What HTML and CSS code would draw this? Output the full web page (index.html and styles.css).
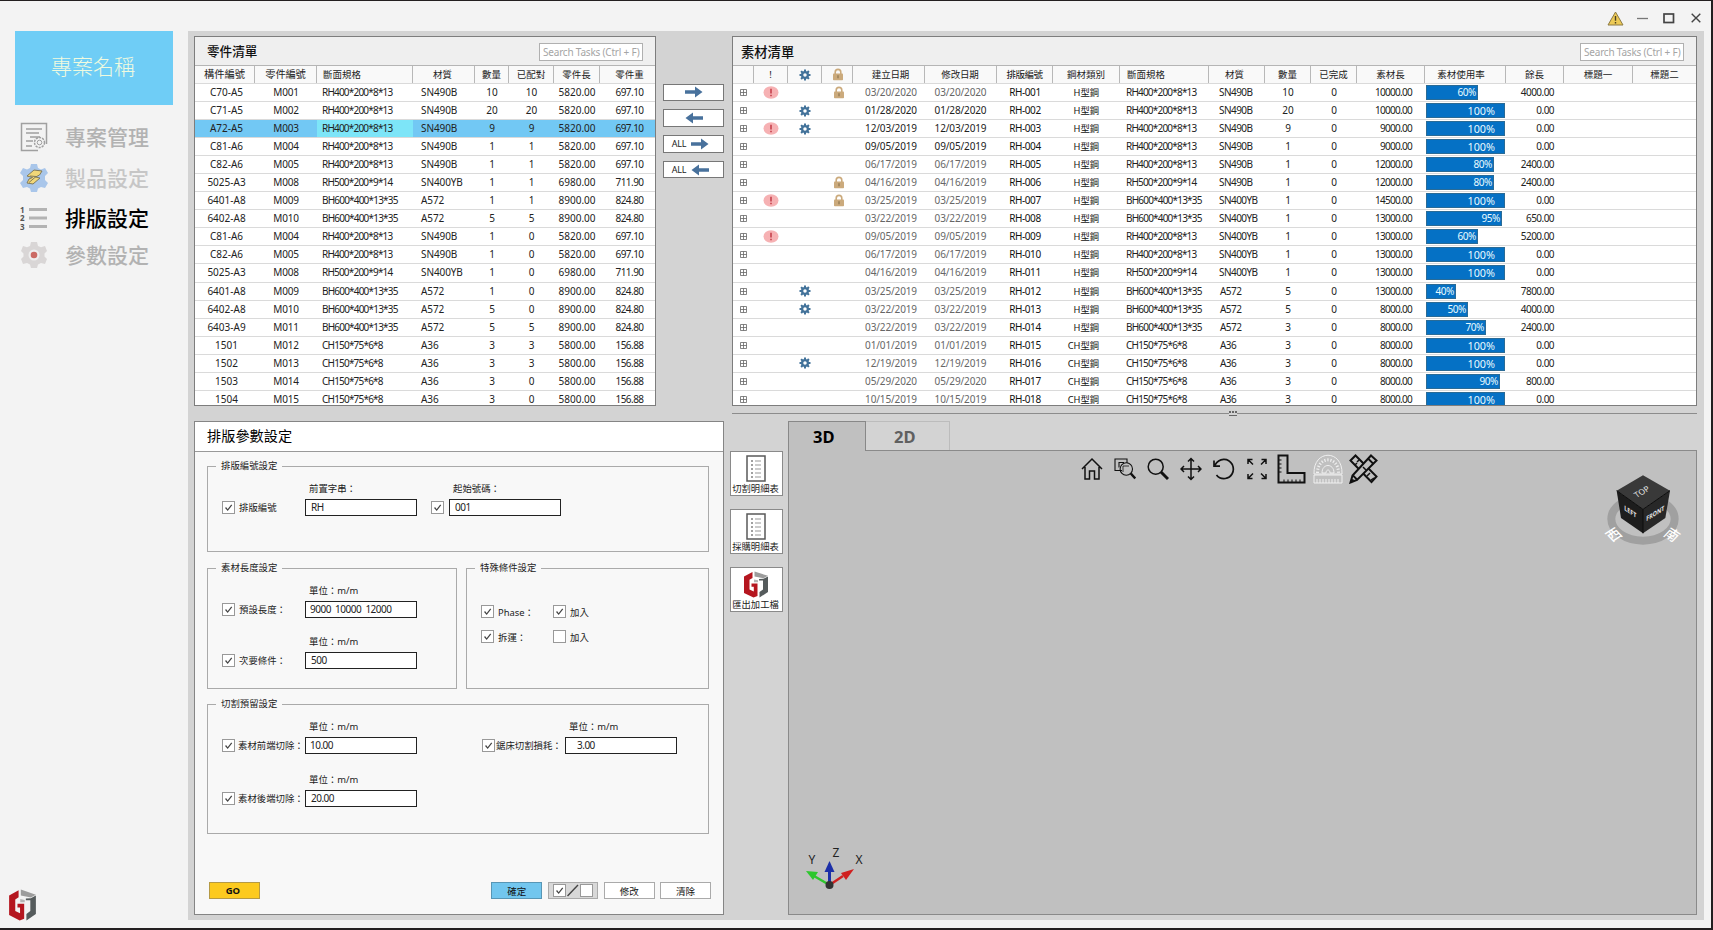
FILE: index.html
```html
<!DOCTYPE html>
<html lang="zh-Hant">
<head>
<meta charset="utf-8">
<title>排版設定</title>
<link rel="stylesheet" href="styles.css">
</head>
<body>
<svg class="defs" width="0" height="0">
  <defs>
    <symbol id="gear" viewBox="0 0 24 24"><path fill="#42729a" fill-rule="evenodd" d="M10 1h4v3l2 .8 2.300-2.100 2.900 2.900L19.200 8l.8 2h3v4h-3l-.8 2 2.100 2.300-2.900 2.900L16 19.200l-2 .8v3h-4v-3l-2-.8-2.300 2.100-2.900-2.900L4.800 16 4 14H1v-4h3l.8-2-2.100-2.300 2.900-2.900L8 4.800l2-.8zM12 8.500a3.500 3.500 0 1 0 0 7a3.500 3.500 0 0 0 0-7z"/></symbol>
    <symbol id="lock" viewBox="0 0 12 13"><path d="M3.200 6V4.200a2.800 2.800 0 0 1 5.600 0V6" fill="none" stroke="#cbaa7c" stroke-width="1.600"/><rect x="1" y="5.500" width="10" height="6.700" rx=".8" fill="#cbaa7c"/><path d="M6 7.300v3" stroke="#8d7550" stroke-width="1.200"/></symbol>
    <symbol id="alert" viewBox="0 0 16 13"><ellipse cx="8" cy="6.500" rx="7.500" ry="6.200" fill="#f6b1b3"/><path d="M8 2.700v4.800M8 8.800v1.500" stroke="#c23a45" stroke-width="1.500"/></symbol>
    <symbol id="plus" viewBox="0 0 7 7"><path d="M.5.5h6v6h-6zM.5 3.500h6M3.500.5v6" fill="none" stroke="#666" stroke-width=".8"/></symbol>
    <symbol id="arrow" viewBox="0 0 18 12"><path d="M0 4.200h10V.5L17.500 6 10 11.500V7.800H0z" fill="#48719c"/></symbol>
    <symbol id="logo" viewBox="0 0 26 27"><path fill="#b5161f" d="M9.500 1L1 5.500v16.500l9.500 4.500 4-1.500V12.500H8.500v3.200h2.300v4.800L6.500 18.500V8.800l3-1.800z"/><path fill="#9c9c9c" d="M11.500.5L25 4.800l-4.500 2.400-9-1.700z"/><path fill="#555b5c" d="M25 5.500V21l-8.500 5.500v-5.500l3.500-2.500V9.500h-4V8l4.500-.2z"/><path fill="#b5b5b5" d="M11 8.500l4 .7v2h-4z"/></symbol>
    <symbol id="sheet" viewBox="0 0 20 27"><path d="M1 1h18v25H1z" fill="#fff" stroke="#5a5a5a" stroke-width="1.500"/><path d="M5 6h2M5 10h2M5 14h2M5 18h2M5 22h2" stroke="#444" stroke-width="1.200"/><path d="M9 6h6M9 10h6M9 14h6M9 18h6M9 22h6" stroke="#999"/></symbol>
    <symbol id="check" viewBox="0 0 13 13"><path d="M3 6.500l2.500 3L10.300 3.500" fill="none" stroke="#444" stroke-width="1.500"/></symbol>
  </defs>
</svg>
<div class="window">
  <aside class="sidebar">
    <div class="project">專案名稱</div>
    <nav class="menu">
      <a class="item">
        <svg width="28" height="30" viewBox="0 0 28 30" fill="none" stroke="#a0a0a0"><path d="M18 28.500H1.500v-27h25V22" stroke-width="1.500"/><path d="M6 7h16M6 11h13M10 15h10M6 19h7M6 24h6" stroke-width="1.300"/><circle cx="19.500" cy="20.500" r="5" stroke-dasharray="2.200 1" stroke-width="1.500"/><circle cx="19.500" cy="20.500" r="2.300"/></svg>
        <span>專案管理</span></a>
      <a class="item pale">
        <svg width="28" height="30" viewBox="0 0 28 30"><path d="M11 1h6l1 4 3 1.500 4-1.500 3 5-3 3v4l3 3-3 5-4-1-3 1.500-1 3.500h-6l-1-3.500L7 24l-4 1-3-5 3-3v-4l-3-3 3-5 4 1.500L10 5z" fill="#a9c6ea"/><path d="M7 13l7-6 8 1-2.500 4-4 2 4.500 1-7 6-6-1 2-4 3.500-1.500z" fill="#f1d778" stroke="#807a5c"/><path d="M10 13l6 .5-7 6" fill="none" stroke="#807a5c"/></svg>
        <span>製品設定</span></a>
      <a class="item active">
        <svg width="28" height="26" viewBox="0 0 28 26"><path d="M9 4.500h18M9 13h18M9 21.500h18" stroke="#b3b3b3" stroke-width="3"/><g class="nums"><text x="0" y="7.500">1</text><text x="0" y="16">2</text><text x="0" y="24.500">3</text></g></svg>
        <span>排版設定</span></a>
      <a class="item">
        <svg width="28" height="28" viewBox="0 0 28 28"><path d="M11 1h6l1 4 3 1.300 4-1.300 2 5-2.500 2.500v3L27 18l-2 5-4-1-3 1.500-1 3.500h-6l-1-3.500L7 22l-4 1-2-5 2.500-2.500v-3L1 10l2-5 4 1.300L10 5z" fill="#d9d6d6"/><circle cx="14" cy="14" r="5.500" fill="#eee"/><circle cx="14" cy="14" r="3.300" fill="#cb6a64"/></svg>
        <span>參數設定</span></a>
    </nav>
    <svg class="brand" width="29" height="32" viewBox="0 0 26 27" preserveAspectRatio="none"><use href="#logo"/></svg>
  </aside>

  <div class="body">
    <header class="titlebar">
      <svg width="17" height="15" viewBox="0 0 17 15"><path d="M8.500 1L16 14H1z" fill="#edca56" stroke="#8c7a45"/><path d="M8.500 5v4.800M8.500 11v1.500" stroke="#4c4020" stroke-width="1.400"/></svg>
      <svg width="11" height="11" viewBox="0 0 11 11"><path d="M0 5.500h11" stroke="#777" stroke-width="1.300"/></svg>
      <svg width="12" height="11" viewBox="0 0 12 11"><rect x="1" y="1" width="9.500" height="8.500" fill="none" stroke="#444" stroke-width="1.700"/></svg>
      <svg width="10" height="10" viewBox="0 0 10 10"><path d="M.7.7l8.600 8.600M9.300.7L.7 9.300" stroke="#444" stroke-width="1.400"/></svg>
    </header>

    <main class="main">
      <section class="top">
        <div class="panel parts">
          <div class="bar"><h2>零件清單</h2><div class="search">Search Tasks (Ctrl + F)</div></div>
          <div class="rows" id="parts"></div>
        </div>
        <div class="moves">
          <button><svg width="18" height="12"><use href="#arrow"/></svg></button>
          <button><svg class="flip" width="18" height="12"><use href="#arrow"/></svg></button>
          <button>ALL<svg width="18" height="12"><use href="#arrow"/></svg></button>
          <button>ALL<svg class="flip" width="18" height="12"><use href="#arrow"/></svg></button>
        </div>
        <div class="panel stock">
          <div class="bar"><h2>素材清單</h2><div class="search">Search Tasks (Ctrl + F)</div></div>
          <div class="rows" id="stock"></div>
        </div>
      </section>

      <section class="bottom">
        <div class="panel params">
          <h3>排版參數設定</h3>
          <form class="form">
            <fieldset class="numbering">
              <legend>排版編號設定</legend>
              <div class="line">
                <div class="field"><i class="cb on"></i><span class="name">排版編號</span><label>前置字串：<b class="in">RH</b></label></div>
                <div class="field second"><i class="cb on"></i><label>起始號碼：<b class="in">001</b></label></div>
              </div>
            </fieldset>
            <div class="pair">
              <fieldset class="length">
                <legend>素材長度設定</legend>
                <div class="field"><i class="cb on"></i><span class="name">預設長度：</span><label>單位：m/m<b class="in tight">9000&nbsp; 10000&nbsp; 12000</b></label></div>
                <div class="field"><i class="cb on"></i><span class="name">次要條件：</span><label>單位：m/m<b class="in">500</b></label></div>
              </fieldset>
              <fieldset class="special">
                <legend>特殊條件設定</legend>
                <div class="opt"><i class="cb on"></i><span>Phase：</span><i class="cb on"></i><span>加入</span></div>
                <div class="opt"><i class="cb on"></i><span>拆運：</span><i class="cb"></i><span>加入</span></div>
              </fieldset>
            </div>
            <fieldset class="cut">
              <legend>切割預留設定</legend>
              <div class="line">
                <div class="field"><i class="cb on"></i><span class="name">素材前端切除：</span><label>單位：m/m<b class="in tight">10.00</b></label></div>
                <div class="field saw"><i class="cb on"></i><span class="name">鋸床切割損耗：</span><label>單位：m/m<b class="in wide">3.00</b></label></div>
              </div>
              <div class="field"><i class="cb on"></i><span class="name">素材後端切除：</span><label>單位：m/m<b class="in">20.00</b></label></div>
            </fieldset>
            <div class="actions">
              <span class="btn go">GO</span>
              <span class="btn ok">確定</span>
              <span class="btn toggle"><i class="cb on"></i><svg width="14" height="13" viewBox="0 0 14 13"><path d="M1.500 12L12 1" stroke="#444" stroke-width="1.400"/></svg><i class="cb"></i></span>
              <span class="btn">修改</span>
              <span class="btn">清除</span>
            </div>
          </form>
        </div>

        <div class="right">
          <div class="splitter"><span class="grip"></span></div>
          <div class="work">
            <div class="exports">
              <div class="ex"><svg width="20" height="27"><use href="#sheet"/></svg>切割明細表</div>
              <div class="ex"><svg width="20" height="27"><use href="#sheet"/></svg>採購明細表</div>
              <div class="ex"><svg width="26" height="27"><use href="#logo"/></svg>匯出加工檔</div>
            </div>
            <div class="viewer">
              <div class="tabs"><span class="tab on">3D</span><span class="tab">2D</span></div>
              <div class="canvas">
                <div class="tools">
                  <svg width="22" height="24" viewBox="0 0 22 24" class="ic"><path d="M1 12L11 2l10 10M4 10v12h4.500v-8h5v8H18V10"/></svg>
                  <svg width="22" height="24" viewBox="0 0 22 24" class="ic thin"><path d="M8 13.500H1V2h12v4M5 10.500V5.500h5"/><circle cx="12.300" cy="12" r="6.200"/><path d="M9 15V9h6" stroke-width=".8"/><path d="M16.800 16.500l4.500 5" stroke-width="2.500"/></svg>
                  <svg width="22" height="24" viewBox="0 0 22 24" class="ic"><circle cx="8.700" cy="9.700" r="7.500"/><path d="M14 15l7 7" stroke-width="3"/></svg>
                  <svg width="22" height="24" viewBox="0 0 22 24" class="ic"><path d="M11 1.500v21M.8 12h20.500M8 4.500l3-3 3 3M8 19.500l3 3 3-3M4 9l-3 3 3 3M18 9l3 3-3 3"/></svg>
                  <svg width="22" height="24" viewBox="0 0 22 24" class="ic"><path d="M2 8C6 1 15 0 19.300 7.500c3 7-1 13-7 14C8 22 5 20 3.500 18M1 3.500V9.200h6" stroke-width="1.700"/></svg>
                  <svg width="22" height="24" viewBox="0 0 22 24" class="ic"><path d="M2 7V2.500h4.500M2.500 3L7 7.500M15.500 2.500H20V7M19.500 3L15 7.500M2 17v4.500h4.500M2.500 21L7 16.500M15.500 21.500H20V17M19.500 21L15 16.500"/></svg>
                  <svg width="29" height="30" viewBox="0 0 29 30" class="ic"><path d="M1.500 1.500h9V19h17v9.500h-26z" stroke-width="2"/><path d="M2 6h2.500M2 10h2.500M2 14h2.500M2 18h2.500M7 28v-2.500M11 28v-2.500M15 28v-2.500M19 28v-2.500M23 28v-2.500" stroke-width="1"/></svg>
                  <svg width="30" height="30" viewBox="0 0 30 30" class="ic white"><path d="M1 20C0-5 30-5 29 20z"/><path d="M4.500 19C4.500 1.500 25.500 1.500 25.500 19" stroke-dasharray="1.200 1.800" stroke-width="3"/><path d="M9 19c0-10 12-10 12 0h-4c0-4-4-4-4 0zM1 21h28v8H1zM4 29v-4M7 29v-4M10 29v-4M13 29v-4M16 29v-4M19 29v-4M22 29v-4M25 29v-4"/></svg>
                  <svg width="29" height="30" viewBox="0 0 29 30" class="ic"><path d="M1.500 6.500l5-5L27.500 22.500l-5 5.500z" stroke-width="2"/><path d="M6 11l2-2M10 6l-2 2M18 22l3-3M22 26l3-2" stroke-width="1.500"/><path d="M22 1.500l5.500 5L8 26l-6.500 2.500L3.500 21.500z" fill="#c0c0c0" stroke-width="2"/><path d="M19 4.500l5.500 5.500M4 21.500l4.500 4.500M1.500 28.500l3-3" stroke-width="1.800"/><path d="M14 13l3 3" /></svg>
                </div>
                <svg class="cube" width="80" height="76" viewBox="0 0 240 228">
                  <ellipse cx="120" cy="147" rx="95" ry="65" fill="none" stroke="#a0a0a0" stroke-width="24"/>
                  <path d="M120 16l81 46-81 56-79-56z" fill="#393939"/><path d="M41 62l79 56v72l-66-46z" fill="#1d1d1d"/><path d="M201 62l-81 56v72l67-46z" fill="#282828"/><path d="M41 62l79 56 81-56M120 118v72" fill="none" stroke="#0c0c0c" stroke-width="3"/>
                  <g fill="#e5e5e5" text-anchor="middle" font-size="25"><text transform="matrix(.85 -.5 .6 .75 122 72)">TOP</text><text font-size="20" font-weight="bold" transform="matrix(.8 .55 0 1 82 132)">LEFT</text><text font-size="20" font-weight="bold" transform="matrix(.8 -.5 0 1 157 137)">FRONT</text></g>
                  <g class="dir" text-anchor="middle"><text transform="matrix(.85 -.55 .75 .8 43 206)">西</text><text transform="matrix(.85 .55 -.75 .8 196 206)">南</text></g>
                </svg>
                <svg class="axes" width="66" height="54" viewBox="0 -4 66 54">
                  <path d="M29.500 36L14 27" stroke="#2ec72e" stroke-width="2.500"/><path d="M6 22l12 1-5 8z" fill="#2ec72e"/>
                  <path d="M29.500 36L43 27" stroke="#d02020" stroke-width="2.500"/><path d="M54 20l-8 11-5-7z" fill="#d02020"/>
                  <path d="M29.500 36V22" stroke="#1c2fa8" stroke-width="3"/><path d="M29.500 12l5 11h-10z" fill="#1c2fa8"/><circle cx="29.500" cy="36" r="4" fill="#333"/>
                  <g font-size="12" fill="#222" text-anchor="middle"><text x="12" y="15">Y</text><text x="36" y="8">Z</text><text x="59" y="15">X</text></g>
                </svg>
              </div>
            </div>
          </div>
        </div>
      </section>
    </main>
  </div>
</div>
<script src="app.js"></script>
</body>
</html>
```
FILE: styles.css
```css
* { box-sizing: border-box; }
body { margin: 0; font-family: "Noto Sans", "Noto Sans CJK TC", sans-serif; color: #222; }
.defs { position: absolute; }
svg { display: block; flex: none; }
h2, h3 { margin: 0; }

.window { display: flex; width: 1713px; height: 930px; background: #f3f3f3; border: solid #231f20; border-width: 1px 2px 2px 0; overflow: hidden; }
.sidebar { width: 188px; display: flex; flex-direction: column; padding: 30px 0 7px 15px; }
.project { width: 158px; height: 74px; background: #6fcdf6; color: #effadf; font-size: 21px; font-weight: 300; display: flex; align-items: center; justify-content: center; padding: 0 2px 7px 0; }
.menu { display: flex; flex-direction: column; margin-top: 12px; padding-left: 5px; }
.item { display: flex; align-items: center; gap: 17px; height: 39.500px; font-size: 21px; color: #b2b2b2; font-weight: 500; }
.item span { padding-bottom: 2px; }
.item.pale { color: #c6c6c6; height: 43px; }
.item.active { color: #000; height: 36px; }
.nums { font: bold 8px "Noto Sans", sans-serif; fill: #555; }
.brand { margin-top: auto; margin-left: -7px; }

.body { width: 1516px; display: flex; flex-direction: column; }
.titlebar { height: 30px; display: flex; align-items: center; padding: 4px 4px 0 1419px; }
.titlebar svg + svg { margin-left: 13px; }
.titlebar svg:nth-child(3) { margin-left: 15px; }
.titlebar svg:nth-child(4) { margin-left: 16px; }
.main { height: 889px; background: #d3d3d3; padding: 5px 7px 5px 6px; display: flex; flex-direction: column; }
.top { display: flex; height: 370px; }
.panel { border: 1px solid #7d7d7d; background: #fff; overflow: hidden; }
.parts { width: 462px; }
.stock { width: 965px; }
.bar { height: 29px; background: #efefef; border-bottom: 1px solid #b5b5b5; display: flex; align-items: center; justify-content: space-between; padding: 2px 12px 0; }
.stock .bar { padding-left: 8px; }
.bar h2 { font-size: 12.600px; font-weight: 500; line-height: 18px; color: #111; }
.stock h2 { font-size: 13.300px; }
.search { width: 104px; height: 18px; border: 1px solid #b0b0b0; background: #fff; color: #a5a5a5; font-size: 10px; letter-spacing: -.2px; line-height: 16px; padding-left: 3px; white-space: nowrap; }

.row { display: grid; height: 18.060px; border-bottom: 1px solid #dadada; font-size: 10px; line-height: 17px; white-space: nowrap; }
.parts .row { grid-template-columns: 60px 62px 96px 62px 34px 45px 46px 55px; }
.stock .row { grid-template-columns: 21px 34px 34px 31px 72px 72px 56px 67px 89px 56px 46px 46px 68px 81px 58px 69px 63px; }
.row > span { display: flex; justify-content: center; align-items: center; }
.row.head { height: 18px; background: #f9f9f9; font-size: 9.500px; }
.row.head > span { border-right: 1px solid #b8b8b8; }
.row.head > span:last-child { border-right: 0; }
.parts .head > span:nth-child(-n+2) { font-size: 10.300px; }
.parts .row:not(.head) .p0 { padding-left: 3px; }
.row.sel { background: #72c8f4; }
.row.sel .p2 { background: #7de5f8; }
.row .p2, .row .s8 { justify-content: flex-start; padding-left: 5px; letter-spacing: -.8px; }
.row .s8 { padding-left: 6px; }
.row.head .p2, .row.head .s8 { letter-spacing: 0; padding-left: 6px; }
.row.head .s8 { padding-left: 7px; }
.row .p3 { justify-content: flex-start; padding-left: 8px; letter-spacing: -.1px; }
.head .p3 { padding-left: 20px; }
.parts .p1 { letter-spacing: -.2px; }
.parts .p7 { letter-spacing: -.55px; padding-left: 4px; }
.head .p7 { letter-spacing: 0; }
.stock .s3 { padding-left: 2px; }
.stock .s4, .stock .s5 { color: #666; letter-spacing: -.14px; }
.stock .s4 { padding-left: 4px; }
.stock .s5 { padding-right: 1px; }
.stock .dark .s4, .stock .dark .s5, .head .s4, .head .s5 { color: #222; }
.stock .s6 { letter-spacing: -.45px; color: #111; }
.stock .row:not(.head) .s7 { justify-content: flex-end; padding-right: 21px; font-size: 9.300px; color: #111; }
.stock .s9 { justify-content: flex-start; padding-left: 10px; letter-spacing: -.55px; }
.stock .a .s9 { padding-left: 11px; }
.stock .head .s9 { padding-left: 16px; letter-spacing: 0; }
.stock .row:not(.head) .s12 { justify-content: flex-end; padding-right: 13px; letter-spacing: -.7px; }
.stock .row:not(.head) .s13 { justify-content: flex-start; padding-left: 1px; }
.stock .head .s13 { padding-right: 8px; }
.stock .row:not(.head) .s14 { justify-content: flex-end; padding-right: 10px; letter-spacing: -.55px; }
.use { height: 15px; background: #0571c5; color: #e8fbff; border: 1px solid #2a6b96; text-align: right; line-height: 13px; padding-right: 1px; letter-spacing: -.4px; }
.use.full { font-size: 10.800px; padding-right: 9px; letter-spacing: 0; }

.moves { width: 76px; padding: 47.500px 8px 0 7px; display: flex; flex-direction: column; gap: 8.600px; }
.moves button { height: 17.300px; width: 61px; border: 1px solid #777; background: #fff; padding: 0; display: flex; align-items: center; justify-content: center; gap: 5px; font: 9px "Noto Sans", sans-serif; color: #222; letter-spacing: -.2px; }
.moves button:nth-child(n+3) { padding-right: 6px; }
.flip { transform: scaleX(-1); }

.bottom { display: flex; height: 509px; }
.params { width: 530px; height: 494px; margin-top: 15px; background: #f8f8f8; border-color: #858585; }
.params h3 { height: 30px; background: #fff; border-bottom: 1px solid #999; font-size: 14.200px; font-weight: 400; line-height: 28px; padding-left: 12px; color: #000; }
.form { padding: 7px 12px 0; font-size: 9.400px; }
fieldset { margin: 0; border: 1px solid #aaa; padding: 0 0 0 14px; min-width: 0; }
legend { padding: 0 5px; margin-left: -6px; height: 14px; line-height: 14px; white-space: nowrap; }
.numbering { height: 93px; width: 502px; }
.pair { display: flex; gap: 9px; margin-top: 9px; }
.length { width: 250px; height: 128px; }
.special { width: 243px; height: 128px; }
.cut { height: 137px; width: 502px; margin-top: 8px; }
.line { display: flex; }
.field { display: flex; align-items: flex-end; height: 34px; }
.field .name { width: 66px; margin-left: 4px; line-height: 17px; white-space: nowrap; letter-spacing: 0; }
.cut .name { margin-left: 3px; width: 67px; font-size: 9.400px; }
.field label { display: flex; flex-direction: column; text-indent: 4px; line-height: 14px; gap: 3px; white-space: nowrap; font-size: 9.400px; }
.cb { width: 13px; height: 13px; border: 1px solid #999; background: #fff; flex: none; display: flex; }
.field .cb { margin-bottom: 2px; }
.tick { width: 11px; height: 11px; }
.in { width: 112px; height: 17px; border: 1px solid #222; background: #fff; font-weight: 400; font-size: 10px; letter-spacing: -.5px; line-height: 14px; text-indent: 5px; }
.in.tight { text-indent: 4px; }
.in.wide { text-indent: 11px; }
.numbering .line { margin-top: 9px; }
.second { margin-left: 14px; }
.second .cb { margin-right: 5px; }
.length legend + .field { margin-top: 9px; }
.length .field + .field { margin-top: 17px; }
.special legend + .opt { margin-top: 24px; }
.opt { display: flex; align-items: center; height: 25px; font-size: 9.400px; }
.opt span { width: 59px; padding-left: 4px; }
.cut .line { margin-top: 9px; }
.cut .line + .field { margin-top: 19px; }
.saw { margin-left: 65px; }
.saw .name { margin-left: 1px !important; width: 69px !important; }
.actions { display: flex; margin-top: 48px; padding-left: 2px; gap: 5.500px; }
.btn { width: 51px; height: 17px; border: 1px solid #aaa; background: #fff; display: flex; align-items: center; justify-content: center; font-size: 9.500px; color: #111; }
.go { background: #fcca1f; border-color: #b59a45; font-weight: 700; margin-right: 226px; padding-right: 3px; }
.ok { background: #72c6ee; border-color: #5896b5; }
.toggle { background: #d8d8d8; }

.right { width: 973px; padding: 7px 0 0 8px; }
.splitter { height: 8px; border-top: 1px solid #8c8c8c; position: relative; }
.grip { position: absolute; left: 497px; top: -3px; width: 8px; height: 5px; background: repeating-linear-gradient(90deg, #666 0 2px, #d3d3d3 2px 3px); border-bottom: 1px solid #666; box-shadow: inset 0 -2px #d3d3d3; }
.work { display: flex; }
.exports { width: 58px; margin-left: -2px; padding-top: 30px; display: flex; flex-direction: column; gap: 13px; }
.ex { width: 53px; height: 45px; background: #fff; border: 1px solid #8a8a8a; display: flex; flex-direction: column; align-items: center; padding: 3px 2px 0 0; gap: 0; font-size: 9.300px; line-height: 13px; white-space: nowrap; }
.viewer { width: 909px; }
.tabs { display: flex; height: 29px; }
.tab { width: 84px; border: solid #bcbcbc; border-width: 1px 1px 0 0; font-size: 16.500px; font-weight: 700; color: #606060; line-height: 29px; padding-left: 28px; }
.tab.on { width: 78px; color: #000; background: #c0c0c0; border-color: #888; border-left-width: 1px; padding-left: 24px; height: 30px; z-index: 1; }
.canvas { height: 465px; background: #c0c0c0; border: 1px solid #8a8a8a; position: relative; padding: 3px 0 0 292px; }
.tools { display: flex; align-items: center; gap: 11px; }
.tools svg:nth-child(7) { margin-left: -2px; }
.tools svg:nth-child(8) { margin-left: -4px; }
.tools svg:nth-child(9) { margin-left: -5px; }
.ic { fill: none; stroke: #111; stroke-width: 1.500; }
.thin { stroke-width: 1.100; }
.white { stroke: #f0f0f0; stroke-width: 1; }
.cube { position: absolute; left: 814px; top: 19px; overflow: visible; }
.dir { fill: #fff; font: 500 40px "Noto Sans CJK TC", sans-serif; }
.axes { position: absolute; left: 11px; top: 394px; }
```
FILE: app.js
```js
const icon = (id, w, h) => `<svg width="${w}" height="${h}"><use href="#${id}"/></svg>`;
const row = (cells, prefix, cls = '') =>
  `<div class="row ${cls}">${cells.map((c, i) => `<span class="${prefix}${i}">${c}</span>`).join('')}</div>`;

const RH4 = 'RH400*200*8*13', RH5 = 'RH500*200*9*14', BH = 'BH600*400*13*35', CH = 'CH150*75*6*8';
const S = 'SN490B', Y = 'SN400YB';

const parts = [
  ['C70-A5', 'M001', RH4, S, 10, 10, '5820.00', '697.10'],
  ['C71-A5', 'M002', RH4, S, 20, 20, '5820.00', '697.10'],
  ['A72-A5', 'M003', RH4, S, 9, 9, '5820.00', '697.10'],
  ['C81-A6', 'M004', RH4, S, 1, 1, '5820.00', '697.10'],
  ['C82-A6', 'M005', RH4, S, 1, 1, '5820.00', '697.10'],
  ['5025-A3', 'M008', RH5, Y, 1, 1, '6980.00', '711.90'],
  ['6401-A8', 'M009', BH, 'A572', 1, 1, '8900.00', '824.80'],
  ['6402-A8', 'M010', BH, 'A572', 5, 5, '8900.00', '824.80'],
  ['C81-A6', 'M004', RH4, S, 1, 0, '5820.00', '697.10'],
  ['C82-A6', 'M005', RH4, S, 1, 0, '5820.00', '697.10'],
  ['5025-A3', 'M008', RH5, Y, 1, 0, '6980.00', '711.90'],
  ['6401-A8', 'M009', BH, 'A572', 1, 0, '8900.00', '824.80'],
  ['6402-A8', 'M010', BH, 'A572', 5, 0, '8900.00', '824.80'],
  ['6403-A9', 'M011', BH, 'A572', 5, 5, '8900.00', '824.80'],
  ['1501', 'M012', CH, 'A36', 3, 3, '5800.00', '156.88'],
  ['1502', 'M013', CH, 'A36', 3, 3, '5800.00', '156.88'],
  ['1503', 'M014', CH, 'A36', 3, 0, '5800.00', '156.88'],
  ['1504', 'M015', CH, 'A36', 3, 0, '5800.00', '156.88'],
];
document.getElementById('parts').innerHTML =
  row(['構件編號', '零件編號', '斷面規格', '材質', '數量', '已配對', '零件長', '零件重'], 'p', 'head') +
  parts.map((r, i) => row(r, 'p', i === 2 ? 'sel' : '')).join('');

// flags: a = alert, g = gear, l = lock
const stock = [
  ['al', '03/20/2020', RH4, S, 10, 10000, 60, 4000],
  ['g', '01/28/2020', RH4, S, 20, 10000, 100, 0],
  ['ag', '12/03/2019', RH4, S, 9, 9000, 100, 0],
  ['', '09/05/2019', RH4, S, 1, 9000, 100, 0],
  ['', '06/17/2019', RH4, S, 1, 12000, 80, 2400],
  ['l', '04/16/2019', RH5, S, 1, 12000, 80, 2400],
  ['al', '03/25/2019', BH, Y, 1, 14500, 100, 0],
  ['', '03/22/2019', BH, Y, 1, 13000, 95, 650],
  ['a', '09/05/2019', RH4, Y, 1, 13000, 60, 5200],
  ['', '06/17/2019', RH4, Y, 1, 13000, 100, 0],
  ['', '04/16/2019', RH5, Y, 1, 13000, 100, 0],
  ['g', '03/25/2019', BH, 'A572', 5, 13000, 40, 7800],
  ['g', '03/22/2019', BH, 'A572', 5, 8000, 50, 4000],
  ['', '03/22/2019', BH, 'A572', 3, 8000, 70, 2400],
  ['', '01/01/2019', CH, 'A36', 3, 8000, 100, 0],
  ['g', '12/19/2019', CH, 'A36', 3, 8000, 100, 0],
  ['', '05/29/2020', CH, 'A36', 3, 8000, 90, 800],
  ['', '10/15/2019', CH, 'A36', 3, 8000, 100, 0],
];
const barWidth = { 40: 30, 50: 42, 60: 52, 70: 60, 80: 68, 90: 74, 95: 76, 100: 79 };
const gear = icon('gear', 12, 12), lock = icon('lock', 12, 13);
document.getElementById('stock').innerHTML =
  row(['', '!', gear, lock, '建立日期', '修改日期', '排版編號', '鋼材類別', '斷面規格', '材質', '數量', '已完成',
    '素材長', '素材使用率', '餘長', '標題一', '標題二'], 's', 'head') +
  stock.map(([f, d, spec, mat, n, len, pct, rest], i) => row([
    icon('plus', 7, 7),
    f.includes('a') ? icon('alert', 16, 13) : '',
    f.includes('g') ? gear : '',
    f.includes('l') ? lock : '',
    d, d, 'RH-' + String(i + 1).padStart(3, '0'),
    (i > 13 ? 'CH' : 'H') + '型鋼', spec, mat, n, 0, len.toFixed(2),
    `<div class="use ${pct === 100 ? 'full' : ''}" style="width:${barWidth[pct]}px">${pct}%</div>`,
    rest.toFixed(2), '', '',
  ], 's', (i > 0 && i < 4 ? 'dark ' : '') + (mat[0] === 'A' ? 'a' : ''))).join('');

document.querySelectorAll('.cb.on').forEach(el => {
  el.innerHTML = '<svg class="tick" viewBox="0 0 13 13"><use href="#check"/></svg>';
});
```
